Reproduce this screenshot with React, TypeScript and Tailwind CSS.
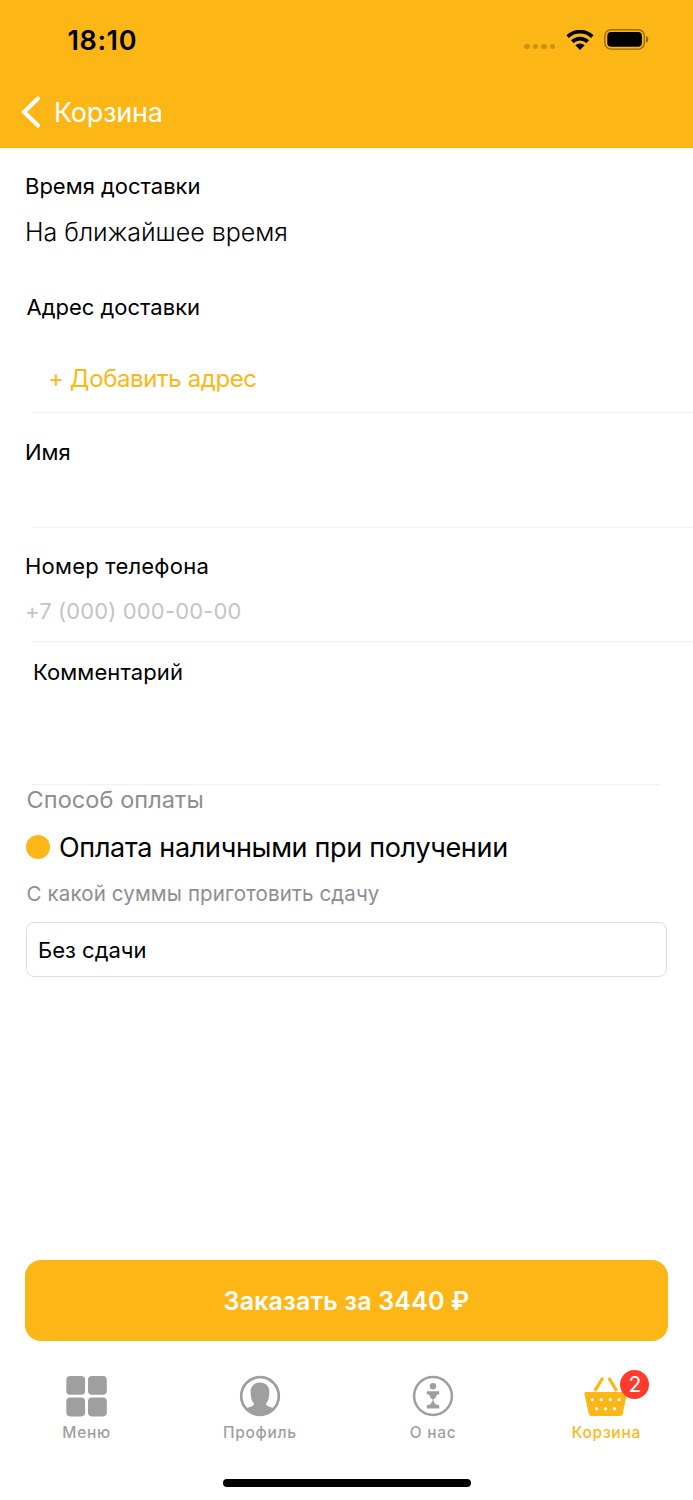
import { useState } from "react";
import type { ReactNode } from "react";

type Tab = {
  id: string;
  label: string;
  icon: ReactNode;
  badge?: number;
};

const tabs: Tab[] = [
  { id: "menu", label: "Меню", icon: <MenuIcon /> },
  { id: "profile", label: "Профиль", icon: <ProfileIcon /> },
  { id: "about", label: "О нас", icon: <AboutIcon /> },
  { id: "cart", label: "Корзина", icon: <BasketIcon />, badge: 2 },
];

function MenuIcon() {
  return (
    <svg width="42" height="42" viewBox="0 0 42 42" fill="currentColor">
      <rect x="0.3" y="1" width="18.8" height="18.8" rx="3.8" />
      <rect x="22" y="1" width="18.8" height="18.8" rx="3.8" />
      <rect x="0.3" y="22.6" width="18.8" height="18.8" rx="3.8" />
      <rect x="22" y="22.6" width="18.8" height="18.8" rx="3.8" />
    </svg>
  );
}

function ProfileIcon() {
  return (
    <svg width="42" height="42" viewBox="0 0 42 42" fill="currentColor">
      <circle cx="21" cy="21" r="18.8" fill="none" stroke="currentColor" strokeWidth="2.7" />
      <path d="M21 7.500c-5.600 0-9.400 3.600-9.400 9.500 0 5.400 1.300 9.300 3.300 11.500.2 1.500-1 2.400-2.700 3.100l-5.400 2C10.500 38 15.500 40.500 21 40.500s10.500-2.500 14.200-6.900l-5.400-2c-1.700-.7-2.900-1.600-2.700-3.100 2-2.200 3.300-6.100 3.300-11.500 0-5.900-3.800-9.500-9.400-9.500z" />
    </svg>
  );
}

function AboutIcon() {
  return (
    <svg width="42" height="42" viewBox="0 0 42 42" fill="currentColor">
      <circle cx="21" cy="21" r="18.9" fill="none" stroke="currentColor" strokeWidth="2.500" />
      <circle cx="21" cy="11.300" r="3.200" />
      <path d="M14.800 16.200h12.400v3.200h-2.200q-.8 3.600-4 5.400-3.200-1.800-4-5.400h-2.200z" />
      <path d="M21 24q1 4.400 4 6h2.200v3.400H14.800V30H17q3-1.600 4-6z" />
    </svg>
  );
}

function BasketIcon() {
  return (
    <svg width="44" height="42" viewBox="0 0 44 42" fill="currentColor">
      <path d="M10.800 15.800 18.700 2.900M32.700 15.800 24.800 2.900" stroke="currentColor" strokeWidth="3.200" />
      <path d="M1.900 17h39.600q1.800 0 1.500 1.800l-4.300 20q-.5 2.300-2.600 2.300H7.300q-2.100 0-2.600-2.300l-4.300-20Q.1 17 1.900 17z" />
      <g fill="#fff">
        <circle cx="8.300" cy="24.700" r="1.600" />
        <circle cx="17.200" cy="24.700" r="1.600" />
        <circle cx="26.200" cy="24.700" r="1.600" />
        <circle cx="35.100" cy="24.700" r="1.600" />
        <circle cx="12.700" cy="33.700" r="1.600" />
        <circle cx="21.600" cy="33.700" r="1.600" />
        <circle cx="30.600" cy="33.700" r="1.600" />
      </g>
    </svg>
  );
}

function StatusBar() {
  return (
    <div className="flex h-20 items-center justify-between pl-[67.5px] pr-[44px] text-black">
      <span className="text-[27px] font-semibold leading-none tracking-[0.6px]">18:10</span>
      <div className="flex items-center">
        <div className="mr-[11px] mt-[13px] flex gap-[3px]">
          {[0, 1, 2, 3].map((dot) => (
            <span key={dot} className="size-[5.500px] rounded-full bg-black/20" />
          ))}
        </div>
        <svg width="28" height="21" viewBox="0 0 28 21" className="mr-[10px]">
          <g fill="none" stroke="#000" strokeWidth="3.700">
            <path d="M1.700 6.700a17.700 17.700 0 0 1 24.600 0" />
            <path d="M6.300 11.600a11.200 11.200 0 0 1 15.400 0" />
          </g>
          <path d="M14 20 9.400 15.300a6.600 6.600 0 0 1 9.200 0z" />
        </svg>
        <svg width="45" height="22" viewBox="0 0 45 22">
          <rect x="0.9" y="0.7" width="39.400" height="19.400" rx="6" fill="none" stroke="#000" strokeOpacity="0.4" strokeWidth="1.400" />
          <rect x="3.300" y="3" width="34.600" height="14.800" rx="3.800" />
          <path d="M42 7c3 1.200 3 5.600 0 6.800z" fillOpacity="0.45" />
        </svg>
      </div>
    </div>
  );
}

export default function App() {
  const [active, setActive] = useState("cart");

  return (
    <div className="flex h-[1500px] w-[693px] flex-col bg-white font-['Inter','Liberation_Sans',sans-serif] text-black">
      <header className="h-[148px] shrink-0 bg-[#fcb716]">
        <StatusBar />
        <button className="flex h-16 items-center pl-[21px] text-white">
          <svg width="20" height="32" viewBox="0 0 20 32" fill="none" stroke="currentColor" strokeWidth="4" strokeLinecap="round" strokeLinejoin="round">
            <path d="M17 2.500 3 16l14 13.500" />
          </svg>
          <span className="ml-[13px] mt-[2px] text-[27px] leading-8 tracking-[-0.2px]">Корзина</span>
        </button>
      </header>

      <main className="flex flex-1 flex-col">
        <section className="flex h-[128px] flex-col pl-[25px] pt-[22px]">
          <h2 className="text-[22px] leading-8">Время доставки</h2>
          <p className="mt-[14px] text-[25px] font-light leading-8">На ближайшее время</p>
        </section>

        <section className="h-[136px] pt-[15px]">
          <h2 className="pl-[26.5px] text-[22px] leading-8">Адрес доставки</h2>
          <button className="ml-[48px] mt-[40px] block text-[24px] leading-8 tracking-[-0.38px] text-[#fcb716]">
            + Добавить адрес
          </button>
        </section>

        <div className="ml-8 h-px bg-[#f1f1f1]" />
        <section className="h-[114px] pl-[25px] pt-[23px]">
          <h2 className="text-[22px] leading-8">Имя</h2>
        </section>

        <div className="ml-8 h-px bg-[#f1f1f1]" />
        <section className="h-[113px] pl-[25px] pt-[22px]">
          <h2 className="text-[22px] leading-8 tracking-[0.22px]">Номер телефона</h2>
          <p className="mt-[13px] text-[22px] leading-8 tracking-[0.14px] text-[#c4c4c6]">
            +7 (000) 000-00-00
          </p>
        </section>

        <div className="ml-8 h-px bg-[#f1f1f1]" />
        <section className="h-[142px] pl-[33px] pt-[14px]">
          <h2 className="text-[22px] leading-8 tracking-[0.1px]">Комментарий</h2>
        </section>

        <div className="ml-8 mr-[33px] h-px bg-[#f1f1f1]" />
        <section className="px-[26px]">
          <h2 className="pl-[0.5px] text-[23.5px] leading-[30px] tracking-[0.08px] text-[#8e8e8e]">
            Способ оплаты
          </h2>
          <label className="mt-[16px] flex items-start">
            <span className="mt-[4px] size-6 rounded-full bg-[#fcb716]" />
            <span className="ml-[9px] mt-px text-[27px] leading-8 tracking-[-0.32px]">
              Оплата наличными при получении
            </span>
          </label>
          <p className="mt-[15px] pl-[0.5px] text-[20.5px] leading-[30px] tracking-[0.14px] text-[#8e8e8e]">
            С какой суммы приготовить сдачу
          </p>
          <div className="mt-[13px] flex h-[55px] items-center rounded-lg border border-[#dedede] pl-[11px] pt-[2px] text-[22px]">
            Без сдачи
          </div>
        </section>
      </main>

      <footer className="flex h-[240px] shrink-0 flex-col">
        <button className="mx-[25px] h-[81px] rounded-2xl bg-[#fcb716] pt-[2px] text-[25px] font-semibold tracking-[0.16px] text-white">
          Заказать за 3440 ₽
        </button>
        <nav className="mt-[34px] grid grid-cols-4">
          {tabs.map((tab) => (
            <button
              key={tab.id}
              onClick={() => setActive(tab.id)}
              className={`flex flex-col items-center ${
                active === tab.id ? "text-[#fcb716]" : "text-[#9f9f9f]"
              }`}
            >
              <span className="relative">
                {tab.icon}
                {tab.badge && (
                  <span className="absolute -right-[21px] -top-[5px] flex size-[29px] items-center justify-center rounded-full bg-[#ff3b30] text-[21px] leading-none text-white">
                    {tab.badge}
                  </span>
                )}
              </span>
              <span className="mt-[6px] text-[15.5px] font-medium leading-5 tracking-[0.7px]">
                {tab.label}
              </span>
            </button>
          ))}
        </nav>
        <div className="mx-auto mt-[35.5px] h-2 w-[248px] rounded-full bg-black" />
      </footer>
    </div>
  );
}
